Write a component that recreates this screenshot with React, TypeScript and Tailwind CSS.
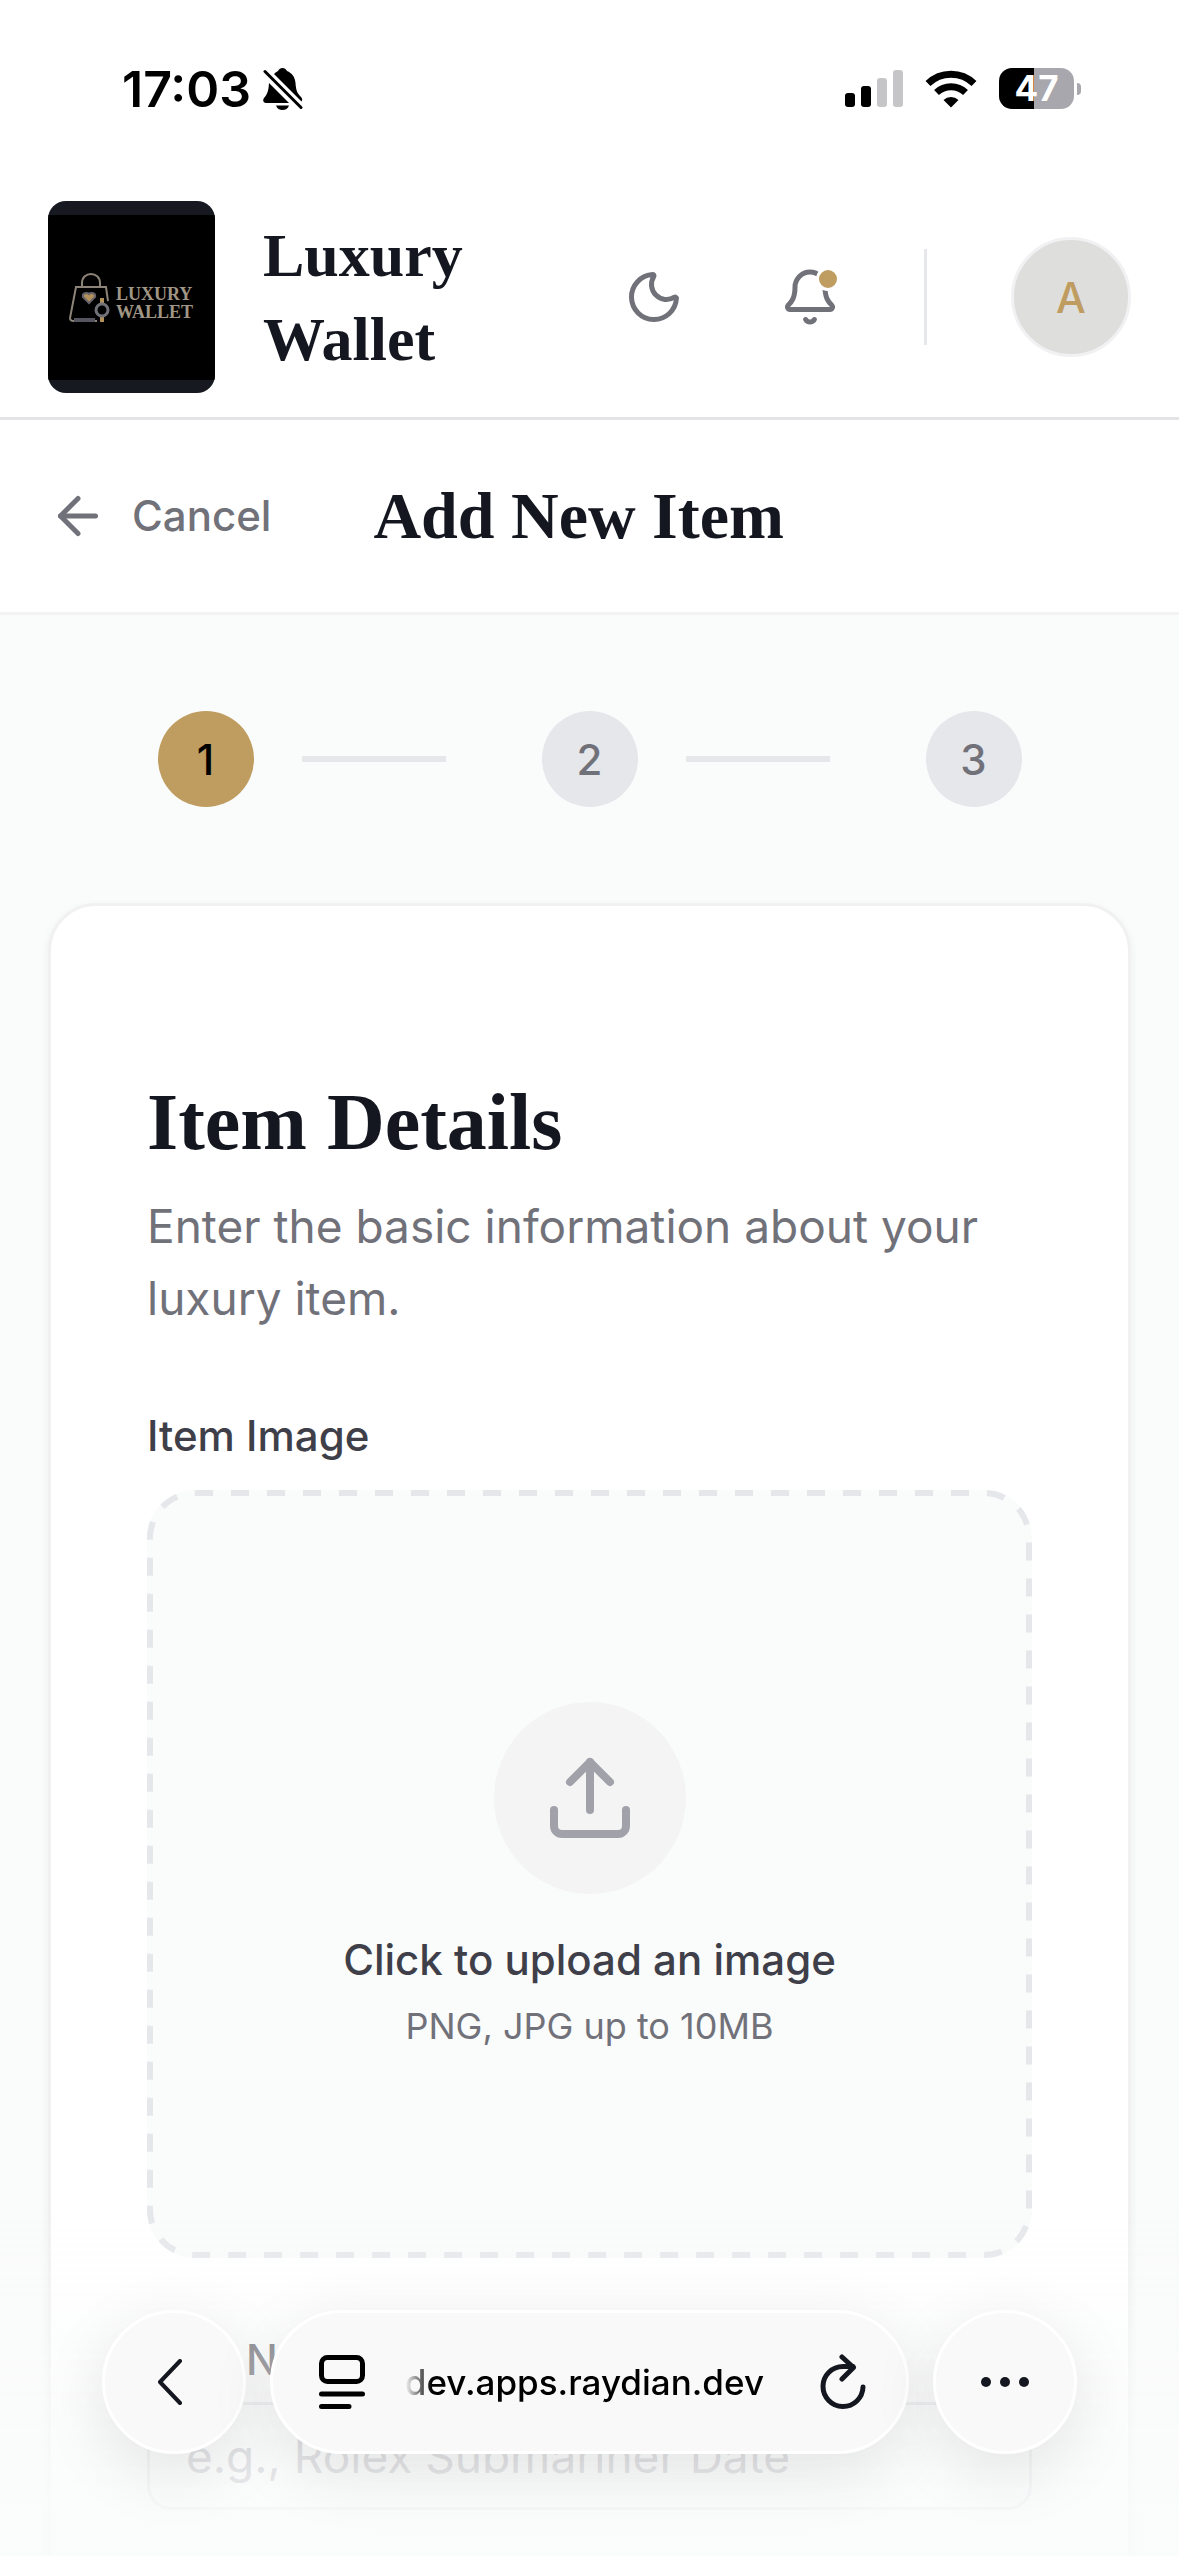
import { ArrowLeft, Bell, Moon, Upload } from "lucide-react";

const steps = [1, 2, 3];

function StatusBar() {
  return (
    <div className="flex h-[177px] shrink-0 items-center justify-between bg-white pr-[98px] pl-[122px] text-black">
      <div className="flex items-center gap-3">
        <span className="text-[50px] leading-[60px] font-semibold">17:03</span>
        <svg className="h-[42px] w-[40px]" viewBox="0 0 40 42" fill="currentColor">
          <path d="M11 6C13 4 14 3.500 15 3C16 1 17.500 0 19.500 0S23 1 24 3C29 5 32 9 32.500 15C33 22 34 25 38 29C39.500 31 39.500 32 38.500 33.500Z" />
          <path d="M6 15L26 35H3C0 35 -0.500 32 1 30C4 26.500 5.500 24 6 15Z" />
          <path d="M13 37.500H26C25 40.500 22.500 42 19.500 42S14 40.500 13 37.500Z" />
          <path d="M2 3.500L38 39.500" stroke="#fff" strokeWidth="7" />
          <path d="M2 3.500L38 39.500" stroke="currentColor" strokeWidth="3" strokeLinecap="round" />
        </svg>
      </div>

      <div className="flex items-center gap-[22px]">
        <svg className="h-[38px] w-[58px]" viewBox="0 0 58 38">
          <rect x="0" y="23" width="10" height="14" rx="3" />
          <rect x="16" y="16" width="10" height="21" rx="3" />
          <rect x="32" y="8" width="10" height="29" rx="3" fill="#c6c6c8" />
          <rect x="48" y="0" width="10" height="37" rx="3" fill="#c6c6c8" />
        </svg>
        <svg className="h-[38px] w-[52px]" viewBox="0 0 52 38" fill="none" stroke="currentColor">
          <path d="M3 13.500A33 33 0 0 1 49 13.500" strokeWidth="7" />
          <path d="M11.500 22.500A21 21 0 0 1 40.500 22.500" strokeWidth="7" />
          <path d="M18.500 30A11 11 0 0 1 33.500 30L26 37.500Z" fill="currentColor" stroke="none" />
        </svg>
        <div className="flex items-center gap-[3px]">
          <div className="flex h-[41px] w-[75px] items-center justify-center rounded-[13px] bg-[linear-gradient(to_right,#000_47%,#a7a7ad_47%)] text-[35px] leading-[41px] font-bold text-white">
            47
          </div>
          <div className="h-3 w-1 rounded-r-full bg-[#a7a7ad]" />
        </div>
      </div>
    </div>
  );
}

function Logo() {
  return (
    <div className="flex h-48 w-[167px] items-center justify-center overflow-hidden rounded-[18px] bg-[#161920]">
      <svg className="w-full bg-black" viewBox="0 0 167 165" fill="none" stroke="#8d8479" strokeWidth="2">
        <path d="M34 72V68C34 56 52 56 52 68V72" />
        <path d="M60 86L58 72H28L22 103C22 105 24 106 26 106H49" />
        <path d="M26 105H47" stroke="#55555f" strokeWidth="4" />
        <path d="M41 88L35 82C34 78 39 77 41 79C43 77 48 78 47 82Z" fill="#b2905a" stroke="#68646a" />
        <path d="M54 83V89M54 102V107" stroke="#b2905a" strokeWidth="4" />
        <circle cx="54" cy="95" r="6" stroke="#71717a" strokeWidth="3" />
        <g fill="#a19685" stroke="none" fontFamily="Liberation Serif, serif" fontSize="18" fontWeight="bold">
          <text x="68" y="85">LUXURY</text>
          <text x="68" y="103">WALLET</text>
        </g>
      </svg>
    </div>
  );
}

function Header() {
  return (
    <header className="flex shrink-0 items-center border-b-3 border-[#e4e4e7] bg-white px-12 py-6">
      <Logo />
      <span className="ml-12 w-[220px] font-['Liberation_Serif',serif] text-[62px] leading-[84px] font-bold text-[#14171f]">
        Luxury Wallet
      </span>
      <div className="ml-auto flex items-center gap-12">
        <button aria-label="Toggle theme" className="flex size-[108px] items-center justify-center text-[#71717a]">
          <Moon className="size-[60px]" />
        </button>
        <button aria-label="Notifications" className="relative flex size-[108px] items-center justify-center text-[#71717a]">
          <Bell className="size-[60px]" />
          <span className="absolute top-6 right-6 size-6 rounded-full border-3 border-white bg-[#bf9c60]" />
        </button>
        <div className="ml-3 h-24 w-[3px] bg-[#e5e7eb]" />
        <button className="ml-9 size-[120px] rounded-full border-3 border-[#f1f1f3] bg-[#dededd] text-[42px] font-medium text-[#bf9c60]">
          A
        </button>
      </div>
    </header>
  );
}

function Stepper() {
  return (
    <ol className="flex items-center justify-center">
      {steps.map((step) => (
        <li key={step} className="flex items-center">
          <span
            className={`flex size-24 items-center justify-center rounded-full text-[42px] font-medium ${
              step === 1 ? "bg-[#bf9c60] text-black" : "bg-[#e5e7eb] text-[#71717a]"
            }`}
          >
            {step}
          </span>
          {step < steps.length && <span className="mr-24 ml-12 h-1.5 w-36 bg-[#e5e7eb]" />}
        </li>
      ))}
    </ol>
  );
}

function ItemDetails() {
  return (
    <section className="mt-24 rounded-[48px] border-3 border-[#f1f1f2] bg-white px-24 pt-42 pb-24 shadow-[0_3px_9px_rgba(0,0,0,0.06)]">
      <h2 className="font-['Liberation_Serif',serif] text-[80px] leading-[96px] font-bold text-[#14171f]">
        Item Details
      </h2>
      <p className="mt-5 text-[46px] leading-[72px] text-[#71717a]">
        Enter the basic information about your luxury item.
      </p>

      <label htmlFor="item-image" className="mt-18 block text-[42px] leading-[60px] font-medium text-[#3f3f4a]">
        Item Image
      </label>
      <label
        htmlFor="item-image"
        className="relative mt-6 flex h-[768px] flex-col items-center justify-center rounded-[48px] bg-[#fafbfb] pt-1"
      >
        {/* dashed outline, longer dashes than border-dashed gives */}
        <svg className="absolute inset-0 size-full p-[3px]" overflow="visible" fill="none" stroke="#e5e7eb">
          <rect width="100%" height="100%" rx="45" strokeWidth="6" strokeDasharray="18 18" />
        </svg>
        <span className="flex size-48 items-center justify-center rounded-full bg-[#f4f4f5] text-[#a1a1aa]">
          <Upload className="size-24" />
        </span>
        <span className="mt-9 text-[42px] leading-[60px] font-medium text-[#3f3f4a]">Click to upload an image</span>
        <span className="mt-3 text-[36px] leading-[48px] text-[#71717a]">PNG, JPG up to 10MB</span>
      </label>
      <input id="item-image" type="file" accept="image/png,image/jpeg" className="hidden" />

      <label htmlFor="item-name" className="mt-18 block text-[42px] leading-[60px] font-medium text-[#3f3f4a]">
        Item Name
      </label>
      <input
        id="item-name"
        type="text"
        placeholder="e.g., Rolex Submariner Date"
        className="mt-3 h-[108px] w-full rounded-[24px] border-3 border-[#e0e1e6] px-9 text-[46px] placeholder:text-[#a1a1aa]"
      />
    </section>
  );
}

function BrowserBar() {
  const glass = "border-3 border-white bg-[#f9f9f9] shadow-[0_18px_66px_rgba(0,0,0,0.1)]";

  return (
    <div className="fixed inset-x-0 bottom-0">
      <div className="flex h-[348px] items-end gap-6 bg-[linear-gradient(to_bottom,rgba(250,251,251,0)_0%,rgba(250,251,251,0.5)_42%,rgba(250,251,251,0.66)_62%,rgba(250,251,251,0.86)_88%)] px-[102px] pb-[102px]">
        <button aria-label="Back" className={`flex size-36 shrink-0 items-center justify-center rounded-full pr-2 ${glass}`}>
          <svg className="h-[46px] w-[26px]" viewBox="0 0 26 46" fill="none" stroke="#14171f" strokeWidth="4" strokeLinecap="round" strokeLinejoin="round">
            <path d="M23 2L3 23L23 44" />
          </svg>
        </button>

        <div className={`flex h-36 min-w-0 flex-1 items-center rounded-full pr-10 pl-[46px] ${glass}`}>
          <button aria-label="Page menu">
            <svg className="h-[54px] w-[46px]" viewBox="0 0 46 54" fill="none" stroke="#000" strokeWidth="5" strokeLinecap="round">
              <rect x="2.500" y="2.500" width="41" height="24" rx="6" />
              <path d="M2.500 39H43.500M2.500 51.500H30" />
            </svg>
          </button>
          <span className="mr-14 ml-auto bg-[linear-gradient(to_right,transparent,#000_27px)] bg-clip-text text-[35px] leading-[48px] font-medium text-transparent">
            dev.apps.raydian.dev
          </span>
          <button aria-label="Reload">
            <svg className="h-[56px] w-[46px]" viewBox="0 0 46 56" fill="none" stroke="#14171f" strokeWidth="5" strokeLinecap="round" strokeLinejoin="round">
              <path d="M43 33A20 20 0 1 1 23 12.500H33" />
              <path d="M22 3L33.500 13.500L22 25" />
            </svg>
          </button>
        </div>

        <button aria-label="More" className={`flex size-36 shrink-0 items-center justify-center gap-[9px] rounded-full ${glass}`}>
          <span className="size-2.5 rounded-full bg-[#14171f]" />
          <span className="size-2.5 rounded-full bg-[#14171f]" />
          <span className="size-2.5 rounded-full bg-[#14171f]" />
        </button>
      </div>
    </div>
  );
}

export default function App() {
  return (
    <div className="flex h-screen flex-col overflow-hidden bg-[#fafbfb] font-['Inter',sans-serif]">
      <StatusBar />
      <Header />

      <div className="flex h-[195px] shrink-0 items-center gap-[102px] border-b-3 border-[#f3f3f4] bg-white px-12">
        <button className="flex items-center gap-6 text-[42px] leading-[60px] font-medium text-[#71717a]">
          <ArrowLeft className="size-[60px]" />
          Cancel
        </button>
        <h1 className="font-['Liberation_Serif',serif] text-[66px] leading-[84px] font-bold text-[#14171f]">
          Add New Item
        </h1>
      </div>

      <main className="min-h-0 flex-1 overflow-hidden px-12 pt-24">
        <Stepper />
        <ItemDetails />
      </main>

      <BrowserBar />
    </div>
  );
}
